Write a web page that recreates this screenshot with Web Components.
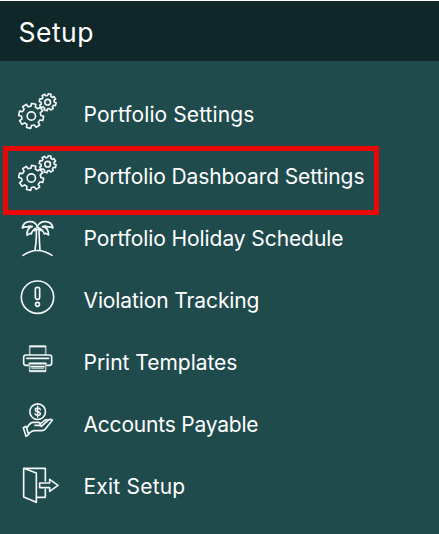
<!DOCTYPE html>
<html lang="en">
<head>
<meta charset="utf-8">
<title>Setup</title>
<style>
html,body{margin:0;height:100%;background:#1f4b4d;overflow:hidden}
</style>
</head>
<body>
<setup-panel>
  <span slot="title">Setup</span>
  <setup-item icon="gears" fit="170">Portfolio Settings</setup-item>
  <setup-item icon="gears" fit="280" highlighted>Portfolio Dashboard Settings</setup-item>
  <setup-item icon="palm" fit="259">Portfolio Holiday Schedule</setup-item>
  <setup-item icon="alert" fit="175">Violation Tracking</setup-item>
  <setup-item icon="printer" fit="153">Print Templates</setup-item>
  <setup-item icon="payable" fit="174">Accounts Payable</setup-item>
  <setup-item icon="exit" fit="101">Exit Setup</setup-item>
</setup-panel>
<script>
// Outline of a cog with flat, slightly tapered teeth.
function cog(cx, cy, outer, inner, turn) {
  const pts = [];
  for (let i = 0; i < 8; i++) {
    const a = (i * 45 + turn) * Math.PI / 180;
    for (const [r, d] of [[inner, -14], [outer, -10], [outer, 10], [inner, 14]]) {
      const t = a + d * Math.PI / 180;
      pts.push((cx + r * Math.cos(t)).toFixed(1) + ' ' + (cy + r * Math.sin(t)).toFixed(1));
    }
  }
  return 'M' + pts.join('L') + 'Z';
}
// Each icon is drawn in thirds of a pixel, shifted down by dy pixels.
const ICONS = {
  gears: { dy: 1, art: `<path d="${cog(63.5, 92.5, 37.5, 29, 12)}"/><circle cx="64" cy="93" r="12.5"/>
    <path d="${cog(113, 51.5, 25.5, 20, 14)}"/><circle cx="113" cy="51.5" r="8.5"/>` },
  palm: { dy: 2, art: `<path d="M39 136Q82 107 126 136M75 120Q80 92 79 62M90 120Q88 90 87 62"/>
    <path d="M82 50Q76 33 57 35Q40 37 37 54Q45 49 52 51Q59 46 67 50Q50 53 51 76L60 70L64 72Q67 58 81 53"/>
    <path d="M82 50Q89 33 108 35Q126 37 129 54Q121 49 113 51Q106 46 97 50Q116 53 116 75L107 70L103 72Q98 58 85 53M73 62Q83 55 94 62"/>` },
  alert: { dy: 2, art: `<circle cx="82.5" cy="75.5" r="48.5"/><rect x="76" y="46" width="13" height="36" rx="6"/><circle cx="82.5" cy="97" r="6"/>` },
  printer: { dy: 4, art: `<path stroke="#a9bcbd" d="M59 57V31H107V57"/><path d="M60 31H106"/>
    <path d="M57 88H48Q41 88 41 81V64Q41 57 48 57H118Q125 57 125 64V81Q125 88 118 88H109M50 67H116"/>
    <rect x="59" y="83" width="48" height="23" stroke="#a9bcbd"/><path d="M58 82H108M64 92H102M60 105H106"/><path stroke="#a9bcbd" d="M66 97H100"/>` },
  payable: { dy: 2, art: `<circle cx="83" cy="47" r="23.5"/>
    <path stroke-width="4.5" d="M91 41Q90 36 83 36Q76 36 76 41Q76 46 83 47Q91 48 91 53Q91 58 83 58Q76 58 75 53M83 31V63"/>
    <path d="M40 95L48 91L56 116L48 121ZM52 94Q60 79 70 79H84Q91 79 91 84Q91 88 84 88H75M91 84L105 72Q111 69 114 73Q122 67 127 73L106 99Q102 104 95 104H73Q66 104 57 112M94 91L114 73M90 89H97L109 77"/>` },
  exit: { dy: 4, art: `<path d="M41 25H106V63M106 88V112H80M41 25V111L79 127V39Z"/>
    <path d="M89 69H119V58L144 76L119 94V83H89Z"/>` }
};

customElements.define('setup-panel', class extends HTMLElement {
  connectedCallback() {
    this.attachShadow({ mode: 'open' }).innerHTML = `
      <style>
        :host{display:block;height:534px;box-sizing:border-box;border-top:1px solid #fff;
          background:#1f4b4d;color:#fff;font-family:Inter,"Liberation Sans",sans-serif}
        header{display:flex;align-items:center;box-sizing:border-box;height:60px;padding:2px 0 0 18.5px;
          background:#102729;font-size:26.5px;line-height:34px;letter-spacing:.5px}
        nav{padding-top:23px}
      </style>
      <header><slot name="title"></slot></header>
      <nav><slot></slot></nav>`;
  }
});

customElements.define('setup-icon', class extends HTMLElement {
  connectedCallback() {
    const icon = ICONS[this.getAttribute('name')];
    this.attachShadow({ mode: 'open' }).innerHTML = `
      <style>:host{display:block;width:60px;height:62px}svg{display:block}</style>
      <svg width="60" height="62" viewBox="0 0 60 62" aria-hidden="true">
        <g transform="translate(0 ${icon.dy}) scale(.33333)" fill="none" stroke="#f4f8f8"
          stroke-width="4.9" stroke-linejoin="round" stroke-linecap="round">${icon.art}</g></svg>`;
  }
});

customElements.define('setup-item', class extends HTMLElement {
  connectedCallback() {
    const root = this.attachShadow({ mode: 'open' });
    root.innerHTML = `
      <style>
        :host{display:flex;align-items:center;height:62px;padding-left:10px;position:relative;
          font-size:21px;line-height:28px;color:#fff}
        .label{margin-left:13.5px;white-space:nowrap}
        :host([highlighted])::after{content:"";position:absolute;left:3px;top:0;width:376px;height:69px;
          box-sizing:border-box;border:5px solid #ec0707}
      </style>
      <setup-icon name="${this.getAttribute('icon')}"></setup-icon>
      <span class="label"><slot></slot></span>`;
    const label = root.querySelector('.label');
    const spare = Number(this.getAttribute('fit')) + 0.9 - label.getBoundingClientRect().width;
    label.style.letterSpacing = spare / this.textContent.length + 'px';
  }
});
</script>
</body>
</html>
